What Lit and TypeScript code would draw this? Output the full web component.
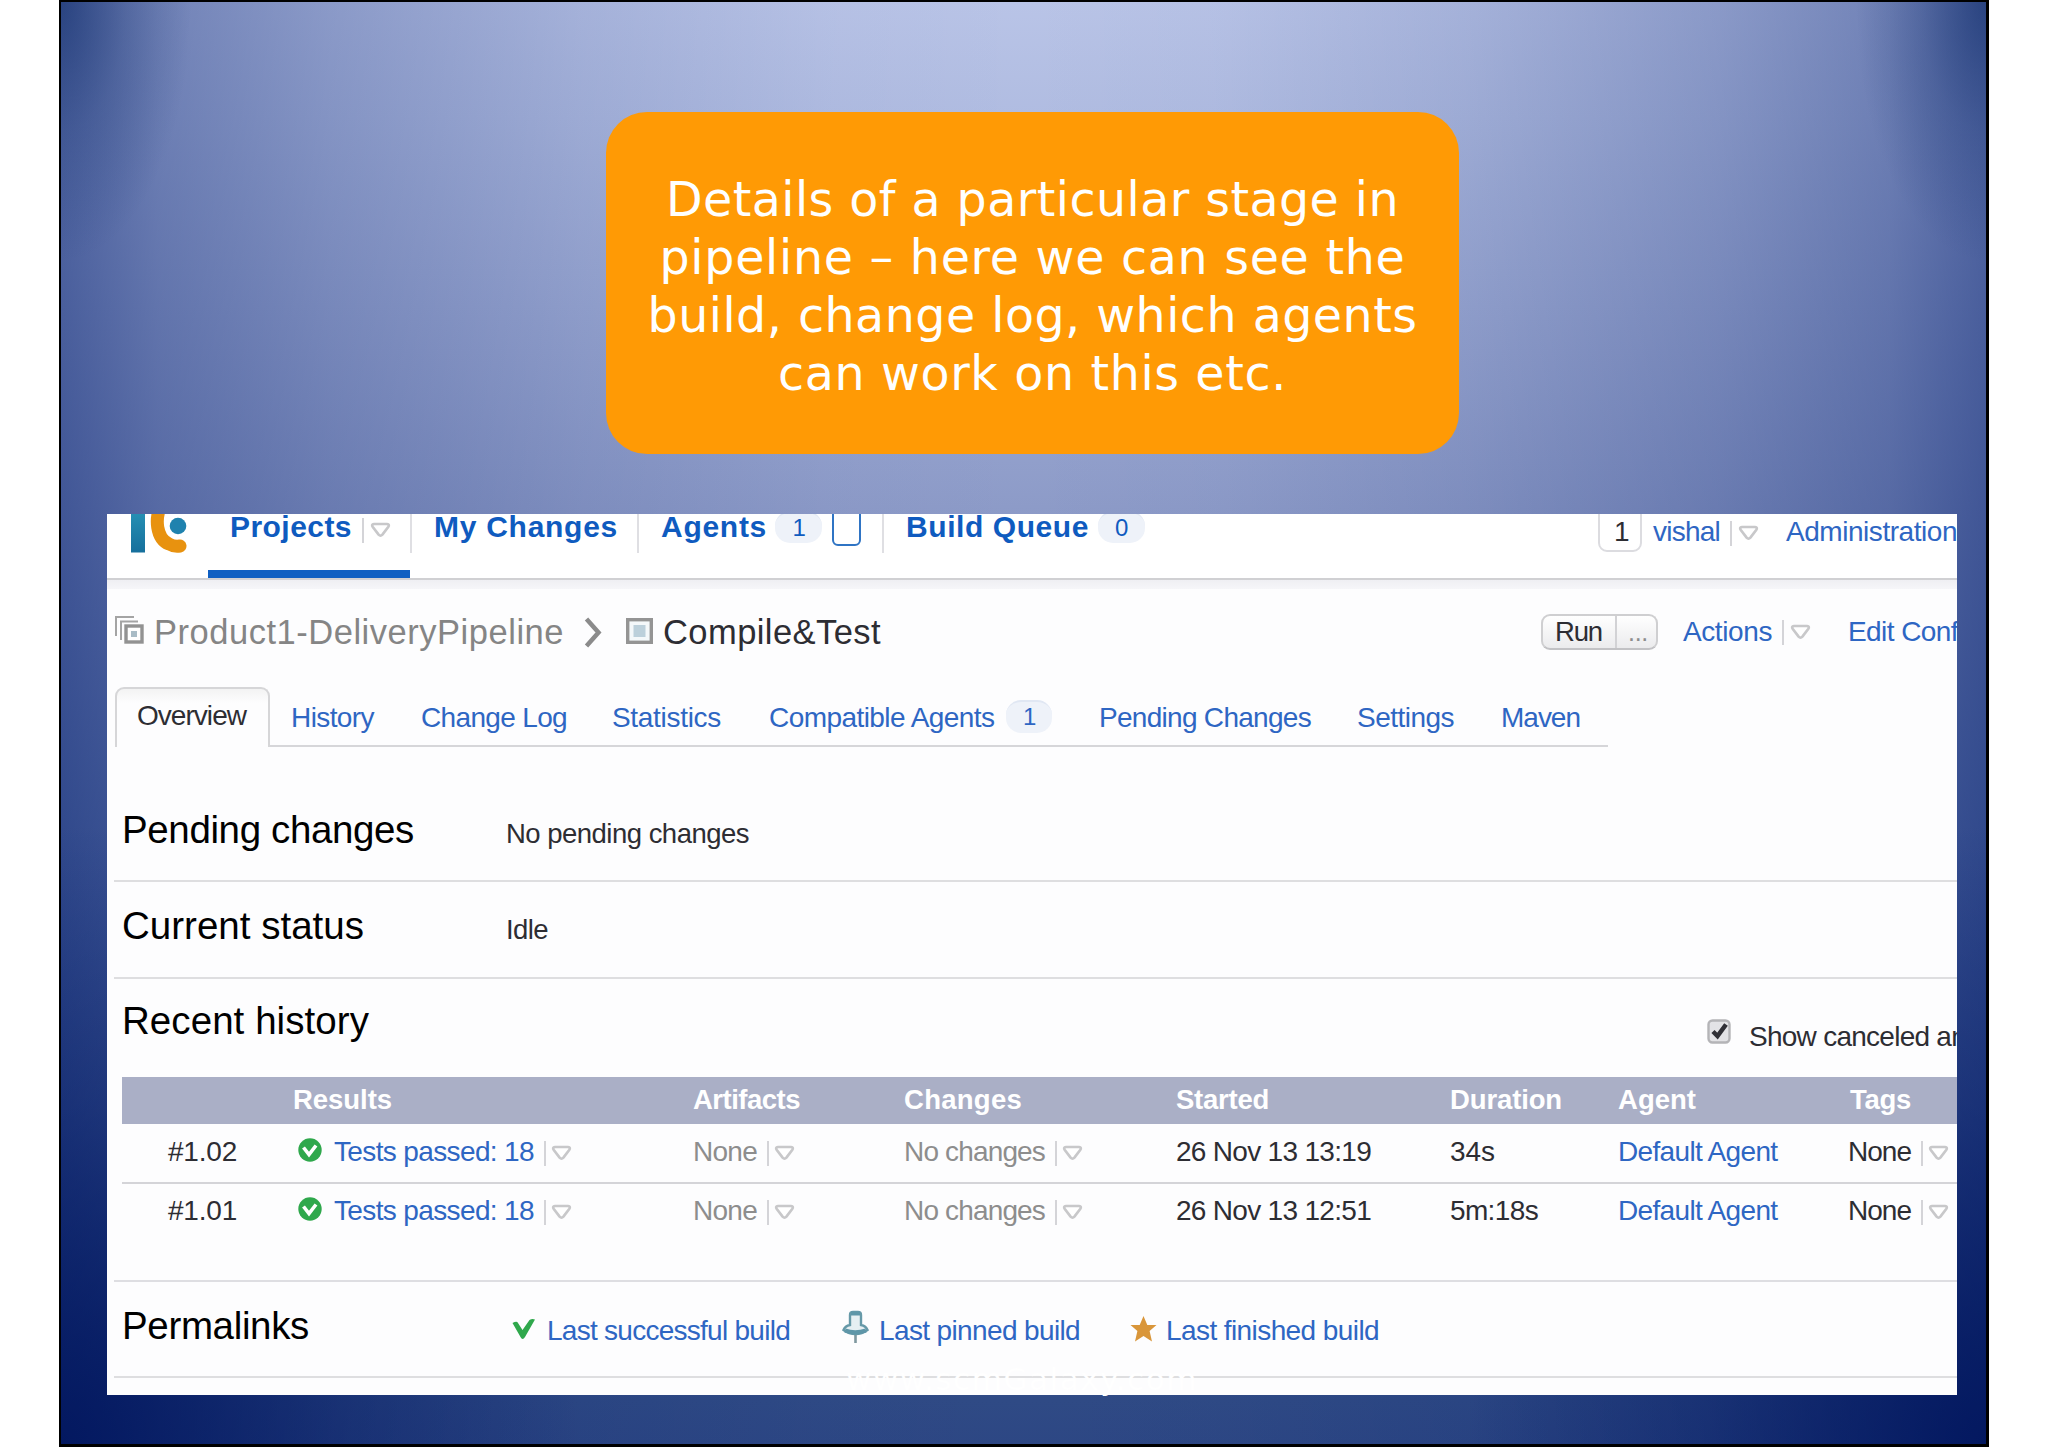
import { LitElement, html, css } from "lit";
import { customElement } from "lit/decorators.js";
import { styleMap } from "lit/directives/style-map.js";

const SANS = '"Liberation Sans", Arial, sans-serif';
const WIDE = '"DejaVu Sans", Verdana, sans-serif';
const ctx = document.createElement("canvas").getContext("2d")!;

/** A run of text tracked so that it fills the given width. */
function run(text: string, width: number, size: number, cls = "", bold = false, family = SANS) {
  ctx.font = `${bold ? "bold " : ""}${size}px ${family}`;
  const spacing = (width - ctx.measureText(text).width) / text.length;
  const style = {
    width: `${width}px`,
    fontSize: `${size}px`,
    letterSpacing: `${spacing.toFixed(3)}px`,
  };
  return html`<span class="run ${bold ? "bold" : ""} ${cls}" style=${styleMap(style)}>${text}</span>`;
}

const caret = () => html`<span class="caret"><i class="bar"></i><svg
  class="tri" width="21" height="16" viewBox="0 0 21 16">
  <path d="M4 2H17Q20 2.4 18.2 5L12.4 12.600Q10.5 14.600 8.6 12.600L2.8 5Q1 2.4 4 2Z" fill="#fff" stroke="#c8c8ca" stroke-width="2.700"/>
</svg></span>`;

const okIcon = html`<svg class="ok" width="24" height="24" viewBox="0 0 24 24">
  <circle cx="12" cy="12" r="11.7" fill="#2fa84c"/>
  <path d="M5.5 9.5L11 16.5L18 7.5" fill="none" stroke="#fff" stroke-width="3.6"/>
</svg>`;

interface Build { id: string; started: string; duration: string; durationW: number; }
const builds: Build[] = [
  { id: "#1.02", started: "26 Nov 13 13:19", duration: "34s", durationW: 45 },
  { id: "#1.01", started: "26 Nov 13 12:51", duration: "5m:18s", durationW: 88 },
];

@customElement("app-root")
export class AppRoot extends LitElement {
  static styles = css`
    :host { display: block; width: 2048px; height: 1447px; background: #fff; overflow: hidden; font-family: "Liberation Sans", Arial, sans-serif; }
    * { box-sizing: border-box; }
    .slide {
      position: relative; width: 1930px; height: 1447px; margin-left: 59px; border: 2px solid #000; border-right-width: 3px; border-bottom-width: 3px;
      display: flex; flex-direction: column; align-items: flex-start;
      background:
        radial-gradient(ellipse 130px 260px at 0 0, rgba(8,38,100,.56), rgba(8,38,100,.22) 50%, rgba(8,38,100,0)),
        radial-gradient(ellipse 130px 260px at 100% 0, rgba(8,38,100,.56), rgba(8,38,100,.22) 50%, rgba(8,38,100,0)),
        radial-gradient(ellipse 520px 620px at 0 100%, rgba(0,20,92,.85), rgba(0,20,92,.3) 55%, rgba(0,20,92,0)),
        radial-gradient(ellipse 520px 620px at 100% 100%, rgba(0,20,92,.85), rgba(0,20,92,.3) 55%, rgba(0,20,92,0)),
        linear-gradient(90deg, rgba(0,28,108,.54) 0, rgba(0,28,108,.39) 5%, rgba(0,28,108,.25) 14%, rgba(0,28,108,.11) 27%, rgba(0,28,108,.02) 40%, rgba(0,28,108,0) 50%, rgba(0,28,108,.02) 60%, rgba(0,28,108,.11) 73%, rgba(0,28,108,.25) 86%, rgba(0,28,108,.39) 95%, rgba(0,28,108,.54) 100%),
        linear-gradient(180deg, #b9c4e7 0, #b0bce1 8%, #8d9bc8 35%, #5f75ab 65%, #2f4a85 97%, #2d4784 100%);
    }
    .callout {
      width: 853px; height: 342px; margin: 110px 0 0 545px; border-radius: 41px; background: #ff9a05; color: #fff;
      display: flex; flex-direction: column; align-items: center; justify-content: center; padding-top: 7px; flex: none;
    }
    .callout .run { line-height: 58px; font-family: "DejaVu Sans", Verdana, sans-serif; }
    .panel {
      width: 1850px; height: 881px; margin: 60px 0 0 46px; flex: none; overflow: hidden; background: #fdfdfe;
      display: flex; flex-direction: column;
    }
    .run { display: inline-block; white-space: nowrap; line-height: 40px; flex: none; }
    .bold { font-weight: bold; }
    .blue { color: #2e66c3; }
    .strong { color: #0f5bbf; }
    .gray { color: #8d8d8d; }
    .crumb { color: #858585; }
    .dark { color: #2d2d33; }
    .white { color: #fff; }
    .row { display: flex; align-items: flex-start; flex: none; white-space: nowrap; }
    .row > * { flex: none; }
    svg { display: block; }

    .header { height: 66px; border-bottom: 2px solid #d0d0d3; background: #fff; }
    .shade { height: 9px; flex: none; background: linear-gradient(#efeff3, #f6f6f9); }
    .logo { margin-left: 24px; }
    .project { width: 202px; height: 64px; margin-left: 21px; border-bottom: 8px solid #0f5fc2; padding-left: 22px; }
    .nav { margin-top: -7px; }
    .split { width: 2px; height: 39px; background: #dfdfe3; }
    .badge { height: 32px; border-radius: 15px; background: #eef2f9; border-top: 2px solid #e0e7f3; display: flex; justify-content: center; }
    .badge .run { line-height: 30px; }
    .b1 { width: 47px; margin: -3px 0 0 8px; }
    .b2 { width: 47px; margin: -3px 0 0 9px; }
    .device { width: 29px; height: 46px; margin: -14px 0 0 10px; border: 2px solid #2f74c4; border-radius: 6px; }
    .inbox { width: 44px; height: 50px; margin: -12px 0 0 453px; border: 2px solid #dcdce0; border-radius: 9px; padding: 8px 0 0 14px; }
    .caret { display: inline-flex; align-items: center; height: 26px; flex: none; }
    .bar { width: 2px; height: 25px; background: #d4d4d8; }
    .tri { margin-left: 6px; }

    .title { height: 98px; padding: 17px 0 0 7px; }
    .title .name { margin-top: 6px; }
    .runbtn {
      display: flex; width: 117px; height: 36px; margin: 8px 0 0 660px; border: 2px solid #cfcfd1; border-bottom-color: #c2c2c5; border-radius: 9px;
      background: linear-gradient(#fff, #ebebed);
    }
    .runbtn .run { line-height: 32px; }
    .runbtn .left { width: 74px; padding-left: 12px; border-right: 2px solid #d2d2d5; }
    .runbtn .more { padding-left: 11px; }

    .tabs { height: 60px; }
    .tab { width: 155px; height: 60px; margin-left: 8px; border: 2px solid #d6d6d8; border-bottom: 0; border-radius: 9px 9px 0 0; padding: 7px 0 0 20px; background: linear-gradient(#f3f3f3, #fdfdfe 14px); }
    .rest { display: flex; width: 1338px; height: 60px; border-bottom: 2px solid #d6d6d9; padding: 11px 0 0 21px; }
    .bt { width: 46px; margin: 2px 0 0 10px; height: 33px; }

    .info { border-bottom: 2px solid #dedee0; margin-left: 7px; padding-left: 8px; }
    .pending { height: 135px; padding-top: 63px; }
    .current { height: 97px; padding-top: 24px; }
    .recent { height: 98px; padding: 22px 0 0 15px; }
    .thead { height: 47px; margin-left: 15px; padding-top: 3px; background: #aaafc6; }
    .thead, .build { display: grid; grid-template-columns: 170px 400px 211px 272px 274px 168px 230px 120px; }
    .build { height: 60px; margin-left: 15px; padding-top: 8px; border-bottom: 2px solid #d4d4d8; }
    .last { height: 98px; margin-left: 7px; padding: 7px 0 0 8px; border-bottom-color: #dedee2; }
    .cell { display: flex; padding-left: 1px; }
    .id { padding-left: 46px; }
    .res { padding-left: 6px; }
    .tag { padding-left: 3px; }
    .build .caret { margin: 8px 0 0 10px; }
    .build .tri { margin-left: 5px; }
    .ok { margin: 6px 12px 0 0; }
    .links { height: 96px; padding-top: 24px; }

    .footer { position: absolute; left: 785px; top: 1357px; }
    .footer .run { font-family: "DejaVu Sans", Verdana, sans-serif; }
  `;

  private build(b: Build) {
    return html`
      <div class="cell id">${run(b.id, 69, 28, "dark")}</div>
      <div class="cell res">${okIcon}${run("Tests passed: 18", 200, 28, "blue")}${caret()}</div>
      <div class="cell">${run("None", 64, 28, "gray")}${caret()}</div>
      <div class="cell">${run("No changes", 141, 28, "gray")}${caret()}</div>
      <div class="cell">${run(b.started, 195, 28, "dark")}</div>
      <div class="cell">${run(b.duration, b.durationW, 28, "dark")}</div>
      <div class="cell">${run("Default Agent", 161, 28, "blue")}</div>
      <div class="cell">${run("None", 63, 28, "dark")}${caret()}</div>`;
  }

  private heading(text: string, w: number) {
    return run(text, w, 27.5, "white", true);
  }

  render() {
    return html`<div class="slide">
      <div class="callout">
        ${run("Details of a particular stage in", 733, 47.5, "", false, WIDE)}
        ${run("pipeline – here we can see the", 746, 47.5, "", false, WIDE)}
        ${run("build, change log, which agents", 770, 47.5, "", false, WIDE)}
        ${run("can work on this etc.", 509, 47.5, "", false, WIDE)}
      </div>
      <div class="panel">
        <div class="row header">
          <svg class="logo" width="56" height="39" viewBox="131 514 56 39">
            <defs><linearGradient id="t" x1="0" y1="0" x2="0" y2="1"><stop offset="0" stop-color="#2a9abb"/><stop offset="1" stop-color="#166f9c"/></linearGradient></defs>
            <rect x="131" y="500" width="14" height="52.5" fill="url(#t)"/>
            <path d="M163 501C153 519 157 539 169 544Q174 547 180 546" fill="none" stroke="#e8920f" stroke-width="13" stroke-linecap="round"/>
            <circle cx="178" cy="526" r="12.5" fill="#fff"/><circle cx="178" cy="526" r="8.3" fill="#1f82ae"/>
          </svg>
          <div class="row project">
            <div class="nav">${run("Projects", 122, 30, "strong", true)}</div>
            <div style="margin:3px 0 0 10px">${caret()}</div>
          </div>
          <i class="split"></i>
          <div class="nav" style="margin-left:22px">${run("My Changes", 184, 30, "strong", true)}</div>
          <i class="split" style="margin-left:19px"></i>
          <div class="nav" style="margin-left:22px">${run("Agents", 106, 30, "strong", true)}</div>
          <span class="badge b1">${run("1", 12, 24, "strong")}</span>
          <span class="device"></span>
          <i class="split" style="margin-left:21px"></i>
          <div class="nav" style="margin-left:22px">${run("Build Queue", 183, 30, "strong", true)}</div>
          <span class="badge b2">${run("0", 13, 24, "strong")}</span>
          <span class="inbox">${run("1", 14, 28, "dark")}</span>
          <div style="margin:-2px 0 0 11px">${run("vishal", 67, 28, "blue")}</div>
          <div style="margin:6px 0 0 10px">${caret()}</div>
          <div style="margin:-2px 0 0 27px">${run("Administration", 171, 28, "blue")}</div>
        </div>
        <div class="shade"></div>
        <div class="row title">
          <svg width="30" height="30" viewBox="0 0 30 30" style="margin:9px 0 0 1px">
            <path d="M1 21V2H19M6 25V6.500H23" fill="none" stroke="#a4a4a4" stroke-width="2"/>
            <rect x="11" y="11" width="16" height="16" fill="#fff" stroke="#929292" stroke-width="3.4"/>
            <rect x="16" y="16" width="6" height="6" fill="#a9bcc6"/>
          </svg>
          <div class="name" style="margin-left:9px">${run("Product1-DeliveryPipeline", 410, 34.5, "crumb")}</div>
          <svg width="19" height="32" viewBox="0 0 19 32" style="margin:11px 0 0 20px"><path d="M2.500 2L14.500 15.500L2.500 29" fill="none" stroke="#8b8b8b" stroke-width="4.500"/></svg>
          <svg width="27" height="26" viewBox="0 0 27 26" style="margin:12px 0 0 23px"><rect x="1.700" y="1.700" width="23.600" height="22.600" fill="#f4f8fa" stroke="#949494" stroke-width="3.400"/><rect x="7.500" y="7" width="12" height="12" fill="#bcd0db"/></svg>
          <div class="name" style="margin-left:10px">${run("Compile&Test", 218, 34.5, "dark")}</div>
          <div class="runbtn"><div class="left">${run("Run", 47, 27.5, "dark")}</div><div class="more">${run("...", 20, 25, "gray")}</div></div>
          <div style="margin:6px 0 0 25px">${run("Actions", 89, 28, "blue")}</div>
          <div style="margin:13px 0 0 10px">${caret()}</div>
          <div style="margin:6px 0 0 37px">${run("Edit Conf", 110, 28, "blue")}</div>
        </div>
        <div class="row tabs">
          <div class="tab">${run("Overview", 109, 28, "dark")}</div>
          <div class="rest">
            ${run("History", 83, 28, "blue")}
            <div style="margin-left:47px">${run("Change Log", 146, 28, "blue")}</div>
            <div style="margin-left:45px">${run("Statistics", 109, 28, "blue")}</div>
            <div style="margin-left:48px">${run("Compatible Agents", 227, 28, "blue")}</div>
            <span class="badge bt">${run("1", 12, 24, "blue")}</span>
            <div style="margin-left:47px">${run("Pending Changes", 212, 28, "blue")}</div>
            <div style="margin-left:46px">${run("Settings", 97, 28, "blue")}</div>
            <div style="margin-left:47px">${run("Maven", 79, 28, "blue")}</div>
          </div>
        </div>
        <div class="row info pending">
          ${run("Pending changes", 292, 38.5)}
          <div style="margin:4px 0 0 92px">${run("No pending changes", 243, 27.5, "dark")}</div>
        </div>
        <div class="row info current">
          ${run("Current status", 242, 38.5)}
          <div style="margin:4px 0 0 142px">${run("Idle", 42, 27.5, "dark")}</div>
        </div>
        <div class="row recent">
          ${run("Recent history", 247, 38.5)}
          <svg width="25" height="25" viewBox="0 0 25 25" style="margin:18px 0 0 1338px">
            <rect x="1.500" y="1.500" width="21" height="22" rx="4" fill="#e3e3e6" stroke="#b4b4b7" stroke-width="2.400"/>
            <path d="M6 12.500L10.500 17L19 5.500" fill="none" stroke="#303036" stroke-width="4.500"/>
          </svg>
          <div style="margin:16px 0 0 17px">${run("Show canceled an", 217, 28, "dark")}</div>
        </div>
        <div class="thead">
          <div></div>
          <div class="cell">${this.heading("Results", 99)}</div>
          <div class="cell">${this.heading("Artifacts", 107)}</div>
          <div class="cell">${this.heading("Changes", 118)}</div>
          <div class="cell">${this.heading("Started", 93)}</div>
          <div class="cell">${this.heading("Duration", 112)}</div>
          <div class="cell">${this.heading("Agent", 78)}</div>
          <div class="cell tag">${this.heading("Tags", 61)}</div>
        </div>
        <div class="build">${this.build(builds[0])}</div>
        <div class="build last">${this.build(builds[1])}</div>
        <div class="row info links">
          ${run("Permalinks", 187, 38.5)}
          <svg width="24" height="22" viewBox="0 0 24 22" style="margin:12px 0 0 203px"><path d="M0.500 5Q5 2.500 6 5L10.500 12L17.500 2Q20 .5 23 1.500L13 19Q10.500 23 8.500 19Z" fill="#2fa84c"/></svg>
          <div style="margin:5px 0 0 11px">${run("Last successful build", 243, 28, "blue")}</div>
          <svg width="27" height="34" viewBox="0 0 27 34" style="margin:4px 0 0 52px">
            <path d="M13.500 23V33" stroke="#7f989f" stroke-width="2.600"/>
            <path d="M1.500 20Q3 16 8 15V5Q8 2 11 2H16Q19 2 19 5V15Q24 16 25.500 20Q20 24 13.500 24T1.500 20Z" fill="#e6eff2" stroke="#6699a8" stroke-width="2.400"/>
            <path d="M9 3.500H18M3 20.500Q13 24 24 20.500" fill="none" stroke="#5e96a8" stroke-width="4"/>
          </svg>
          <div style="margin:5px 0 0 10px">${run("Last pinned build", 201, 28, "blue")}</div>
          <svg width="27" height="26" viewBox="0 0 27 26" style="margin:10px 0 0 50px"><path d="M13.500 0L17.300 9H26.500L19.600 15L22 25.500L13.500 20L5 25.500L7.400 15L.5 9H9.700Z" fill="#d9963a"/></svg>
          <div style="margin:5px 0 0 9px">${run("Last finished build", 213, 28, "blue")}</div>
        </div>
      </div>
      <div class="footer">${run("www.scmGalaxy.com", 352, 31, "white", false, WIDE)}</div>
    </div>`;
  }
}
